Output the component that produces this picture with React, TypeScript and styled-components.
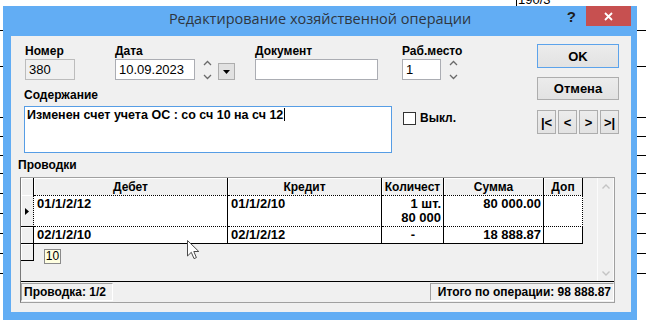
import React, { ReactElement } from "react"
import styled, { createGlobalStyle } from "styled-components"

const BLUE = "#62adf4"
const UI_FONT = `"Liberation Sans", Arial, sans-serif`

const GlobalStyle = createGlobalStyle`
	html, body {
		margin: 0;
		padding: 0;
		background: #fff;
	}
	body {
		font-family: ${UI_FONT};
		color: #000;
	}
`

// table lines of the program behind the dialog
const deskLines = [30, 66, 117, 136, 155, 173, 193, 213, 233, 253, 273]

const Desktop = styled.div`
	position: relative;
	width: 646px;
	height: 326px;
	overflow: hidden;
	background: ${deskLines
		.map((y) => `linear-gradient(#000, #000) 0 ${y}px / 100% 1px no-repeat`)
		.join(", ")},
		#fff;
`

const DeskNote = styled.div`
	position: absolute;
	left: 516px;
	top: -8px;
	font: 13px ${UI_FONT};
	border-left: 1px solid #000;
	padding-left: 1px;
`

const Window = styled.div`
	position: absolute;
	left: 3px;
	top: 6px;
	width: 634px;
	height: 314px;
	background: ${BLUE};
	display: flex;
	flex-direction: column;
`

const TitleBar = styled.div`
	height: 30px;
	flex: none;
	display: grid;
	grid-template-columns: 1fr auto 1fr;
`

const Title = styled.div`
	padding-top: 3px;
	font: 14.5px "Open Sans", "Noto Sans", sans-serif;
	line-height: 20px;
	color: #2f3640;
	white-space: nowrap;
`

const Caption = styled.div`
	display: flex;
	justify-content: flex-end;
	align-items: flex-start;
	padding-right: 6px;
`

const Help = styled.div`
	font: bold 15px ${UI_FONT};
	line-height: 20px;
	color: #1d1d1d;
	margin-right: 10px;
	padding-top: 1px;
`

const CloseButton = styled.div`
	width: 45px;
	height: 20px;
	background: #c75050;
	display: flex;
	align-items: center;
	justify-content: center;
`

const Client = styled.div`
	flex: 1;
	margin: 0 6px 8px 8px;
	background: #f0f0f0;
	display: flex;
	flex-direction: column;
`

const TopArea = styled.div`
	display: flex;
	padding: 8px 12px 0 13px;
`

const LeftCol = styled.div`
	flex: 1;
	padding-top: 1px;
	display: flex;
	flex-direction: column;
`

const FieldsRow = styled.div`
	display: flex;
	align-items: flex-start;
`

const Field = styled.div<{ $w?: number; $ml?: number }>`
	display: flex;
	flex-direction: column;
	width: ${(p) => (p.$w ? `${p.$w}px` : "auto")};
	margin-left: ${(p) => p.$ml || 0}px;
`

const Label = styled.div<{ $top?: number }>`
	font: bold 12px ${UI_FONT};
	line-height: 13px;
	height: 13px;
	margin: ${(p) => p.$top || 0}px 0 1px;
	white-space: nowrap;
`

const Controls = styled.div`
	display: flex;
	align-items: flex-start;
`

const Input = styled.div<{ $w: number; $disabled?: boolean }>`
	box-sizing: border-box;
	width: ${(p) => p.$w}px;
	height: 21px;
	border: 1px solid ${(p) => (p.$disabled ? "#bcbcbc" : "#abadb3")};
	background: ${(p) => (p.$disabled ? "#f0f0f0" : "#fff")};
	font: 13px ${UI_FONT};
	line-height: 19px;
	padding: 0 3px;
	white-space: nowrap;
`

const SpinSvg = styled.svg`
	flex: none;
	margin-left: 8px;
	fill: none;
	stroke: #6a6a6a;
	stroke-width: 1.3;
`

const Spinner = () => (
	<SpinSvg width={9} height={21} viewBox="0 0 9 21">
		<path d="M1 6 L4.5 2.5 L8 6" />
		<path d="M1 16 L4.5 19.5 L8 16" />
	</SpinSvg>
)

const DropButton = styled.div`
	box-sizing: border-box;
	width: 17px;
	height: 17px;
	margin: 4px 0 0 6px;
	background: #e1e1e1;
	border: 1px solid #adadad;
	display: flex;
	align-items: center;
	justify-content: center;
`

const MemoRow = styled.div`
	display: flex;
	align-items: flex-start;
	margin-top: 3px;
`

const Memo = styled.div`
	box-sizing: border-box;
	width: 368px;
	height: 47px;
	border: 1px solid #569de5;
	background: #fff;
	padding: 1px 2px;
	font: bold 12.5px ${UI_FONT};
	line-height: 15px;
`

const Caret = styled.span`
	display: inline-block;
	width: 1px;
	height: 13px;
	margin-left: 1px;
	background: #000;
	vertical-align: -2px;
`

const Check = styled.div`
	display: flex;
	align-items: center;
	gap: 4px;
	margin: 5px 0 0 11px;
`

const CheckBox = styled.div`
	box-sizing: border-box;
	width: 13px;
	height: 13px;
	border: 1px solid #333;
	background: #fff;
`

const CheckText = styled.span`
	font: bold 12px ${UI_FONT};
`

const ButtonCol = styled.div`
	width: 82px;
	display: flex;
	flex-direction: column;
`

const Button = styled.div<{ $h: number; $top?: number; $default?: boolean }>`
	box-sizing: border-box;
	height: ${(p) => p.$h}px;
	margin-top: ${(p) => p.$top || 0}px;
	border: 1px solid ${(p) => (p.$default ? "#5ca3eb" : "#adadad")};
	background: linear-gradient(#ececec, #e2e2e2);
	font: bold 13px ${UI_FONT};
	display: flex;
	align-items: center;
	justify-content: center;
`

const NavRow = styled.div`
	display: flex;
	gap: 2px;
	margin-top: 10px;
`

const NavButton = styled.div`
	box-sizing: border-box;
	width: 19px;
	height: 24px;
	border: 1px solid #adadad;
	background: linear-gradient(#ececec, #e2e2e2);
	font: bold 13px ${UI_FONT};
	display: flex;
	align-items: center;
	justify-content: center;
`

const SectionLabel = styled.div`
	font: bold 12px ${UI_FONT};
	line-height: 13px;
	height: 13px;
	margin: 6px 0 0 7px;
`

const GridPanel = styled.div`
	margin: 5px 16px 0 9px;
	border: 1px solid #a0a0a0;
	border-left-color: #787878;
`

const GridArea = styled.div`
	height: 103px;
	border-bottom: 1px solid #000;
	display: flex;
`

const GridBody = styled.div`
	flex: 1;
	position: relative;
`

const Table = styled.table`
	table-layout: fixed;
	border-collapse: separate;
	border-spacing: 0;
	width: 562px;
	font: bold 13px ${UI_FONT};
`

const HeadCell = styled.th`
	box-sizing: border-box;
	height: 17px;
	padding: 0;
	background: #f0f0f0;
	border-right: 1px solid #000;
	box-shadow: inset 1px 1px 0 #fff;
	font-size: 12px;
	line-height: 16px;
	text-align: center;
	white-space: nowrap;
	overflow: hidden;
`

const RowHead = styled.td<{ $focus?: boolean }>`
	box-sizing: border-box;
	padding: 0;
	height: 17px;
	background: #f0f0f0;
	border-right: 1px ${(p) => (p.$focus ? "dotted" : "solid")} #000;
	border-bottom: 1px solid #000;
	box-shadow: inset 1px 1px 0 #fff;
	text-align: center;
	vertical-align: middle;
`

const Cell = styled.td<{ $focus?: boolean; $last?: boolean; $right?: boolean; $center?: boolean }>`
	box-sizing: border-box;
	height: ${(p) => (p.$focus ? 32 : 17)}px;
	padding: ${(p) => (p.$focus ? "1px" : "0")} 2px 0 3px;
	background: #fff;
	vertical-align: top;
	text-align: ${(p) => (p.$right ? "right" : p.$center ? "center" : "left")};
	line-height: ${(p) => (p.$focus ? 14 : 16)}px;
	border-top: ${(p) => (p.$focus ? "1px dotted #000" : "0")};
	border-bottom: 1px ${(p) => (p.$focus ? "dotted" : "solid")} #000;
	border-right: 1px ${(p) => (p.$focus && p.$last ? "dotted" : "solid")} #000;
	white-space: nowrap;
	overflow: hidden;
`

const Hint = styled.div`
	position: absolute;
	left: 23px;
	top: 71px;
	box-sizing: border-box;
	width: 17px;
	height: 15px;
	border: 1px solid #8a8a8a;
	background: #ffffe1;
	font: 12px ${UI_FONT};
	line-height: 13px;
	text-align: center;
`

const Pointer = styled.svg`
	position: absolute;
	left: 166px;
	top: 62px;
`

const ScrollBar = styled.div`
	box-sizing: border-box;
	width: 17px;
	display: flex;
	flex-direction: column;
	justify-content: space-between;
	align-items: center;
	padding: 6px 0 5px;
	background: #f0f0f0;
	border-left: 1px solid #fbfbfb;
	border-right: 1px solid #fbfbfb;
`

const ScrollArrow = styled.svg`
	fill: none;
	stroke: #c4c4c4;
	stroke-width: 1.4;
`

const StatusBar = styled.div`
	display: flex;
	justify-content: space-between;
	padding: 1px 0;
`

const StatusPanel = styled.div<{ $w: number; $right?: boolean }>`
	box-sizing: border-box;
	width: ${(p) => p.$w}px;
	height: 18px;
	border: 1px solid;
	border-color: #a0a0a0 #fff #fff #a0a0a0;
	padding: 0 2px;
	font: bold 12px ${UI_FONT};
	line-height: 16px;
	text-align: ${(p) => (p.$right ? "right" : "left")};
	white-space: nowrap;
`

const columns = [13, 194, 154, 62, 100, 39]

export default function App(): ReactElement {
	return (
		<>
			<GlobalStyle />
			<Desktop>
				<DeskNote>190/3</DeskNote>
				<Window>
					<TitleBar>
						<span />
						<Title>Редактирование хозяйственной операции</Title>
						<Caption>
							<Help>?</Help>
							<CloseButton>
								<svg width="9" height="9" viewBox="0 0 9 9" stroke="#fff" strokeWidth="1.8">
									<path d="M1 1 L8 8 M8 1 L1 8" />
								</svg>
							</CloseButton>
						</Caption>
					</TitleBar>
					<Client>
						<TopArea>
							<LeftCol>
								<FieldsRow>
									<Field $w={90} $ml={1}>
										<Label>Номер</Label>
										<Input $w={50} $disabled>
											380
										</Input>
									</Field>
									<Field $w={140}>
										<Label>Дата</Label>
										<Controls>
											<Input $w={80}>10.09.2023</Input>
											<Spinner />
											<DropButton>
												<svg width="7" height="4" viewBox="0 0 7 4">
													<path d="M0 0 H7 L3.5 4 Z" fill="#000" />
												</svg>
											</DropButton>
										</Controls>
									</Field>
									<Field $w={147}>
										<Label>Документ</Label>
										<Input $w={123} />
									</Field>
									<Field>
										<Label>Раб.место</Label>
										<Controls>
											<Input $w={39}>1</Input>
											<Spinner />
										</Controls>
									</Field>
								</FieldsRow>
								<Label $top={9}>Содержание</Label>
								<MemoRow>
									<Memo>
										Изменен счет учета ОС : со сч 10 на сч 12
										<Caret />
									</Memo>
									<Check>
										<CheckBox />
										<CheckText>Выкл.</CheckText>
									</Check>
								</MemoRow>
							</LeftCol>
							<ButtonCol>
								<Button $h={24} $default>
									OK
								</Button>
								<Button $h={23} $top={9}>
									Отмена
								</Button>
								<NavRow>
									<NavButton>|&lt;</NavButton>
									<NavButton>&lt;</NavButton>
									<NavButton>&gt;</NavButton>
									<NavButton>&gt;|</NavButton>
								</NavRow>
							</ButtonCol>
						</TopArea>
						<SectionLabel>Проводки</SectionLabel>
						<GridPanel>
							<GridArea>
								<GridBody>
									<Table>
										<colgroup>
											{columns.map((w, i) => (
												<col key={i} style={{ width: w }} />
											))}
										</colgroup>
										<thead>
											<tr>
												<HeadCell />
												<HeadCell>Дебет</HeadCell>
												<HeadCell>Кредит</HeadCell>
												<HeadCell>Количест</HeadCell>
												<HeadCell>Сумма</HeadCell>
												<HeadCell>Доп</HeadCell>
											</tr>
										</thead>
										<tbody>
											<tr>
												<RowHead $focus>
													<svg width="4" height="7" viewBox="0 0 4 7">
														<path d="M0 0 L4 3.5 L0 7 Z" fill="#000" />
													</svg>
												</RowHead>
												<Cell $focus>01/1/2/12</Cell>
												<Cell $focus>01/1/2/10</Cell>
												<Cell $focus $right>
													1 шт.
													<br />
													80 000
												</Cell>
												<Cell $focus $right>
													80 000.00
												</Cell>
												<Cell $focus $last />
											</tr>
											<tr>
												<RowHead />
												<Cell>02/1/2/10</Cell>
												<Cell>02/1/2/12</Cell>
												<Cell $center>-</Cell>
												<Cell $right>18 888.87</Cell>
												<Cell />
											</tr>
											<tr>
												<RowHead />
											</tr>
										</tbody>
									</Table>
									<Hint>10</Hint>
									<Pointer width="13" height="20" viewBox="0 0 13 20">
										<path
											d="M0.5 0.5 L0.5 16 L4.3 12.3 L7 18.6 L9.4 17.6 L6.8 11.5 L11.8 11.5 Z"
											fill="#fff"
											stroke="#4a4a4a"
											strokeWidth="1"
										/>
									</Pointer>
								</GridBody>
								<ScrollBar>
									<ScrollArrow width="8" height="5" viewBox="0 0 8 5">
										<path d="M0.5 4.5 L4 1 L7.5 4.5" />
									</ScrollArrow>
									<ScrollArrow width="8" height="5" viewBox="0 0 8 5">
										<path d="M0.5 0.5 L4 4 L7.5 0.5" />
									</ScrollArrow>
								</ScrollBar>
							</GridArea>
							<StatusBar>
								<StatusPanel $w={92}>Проводка: 1/2</StatusPanel>
								<StatusPanel $w={184} $right>
									Итого по операции: 98 888.87
								</StatusPanel>
							</StatusBar>
						</GridPanel>
					</Client>
				</Window>
			</Desktop>
		</>
	)
}
